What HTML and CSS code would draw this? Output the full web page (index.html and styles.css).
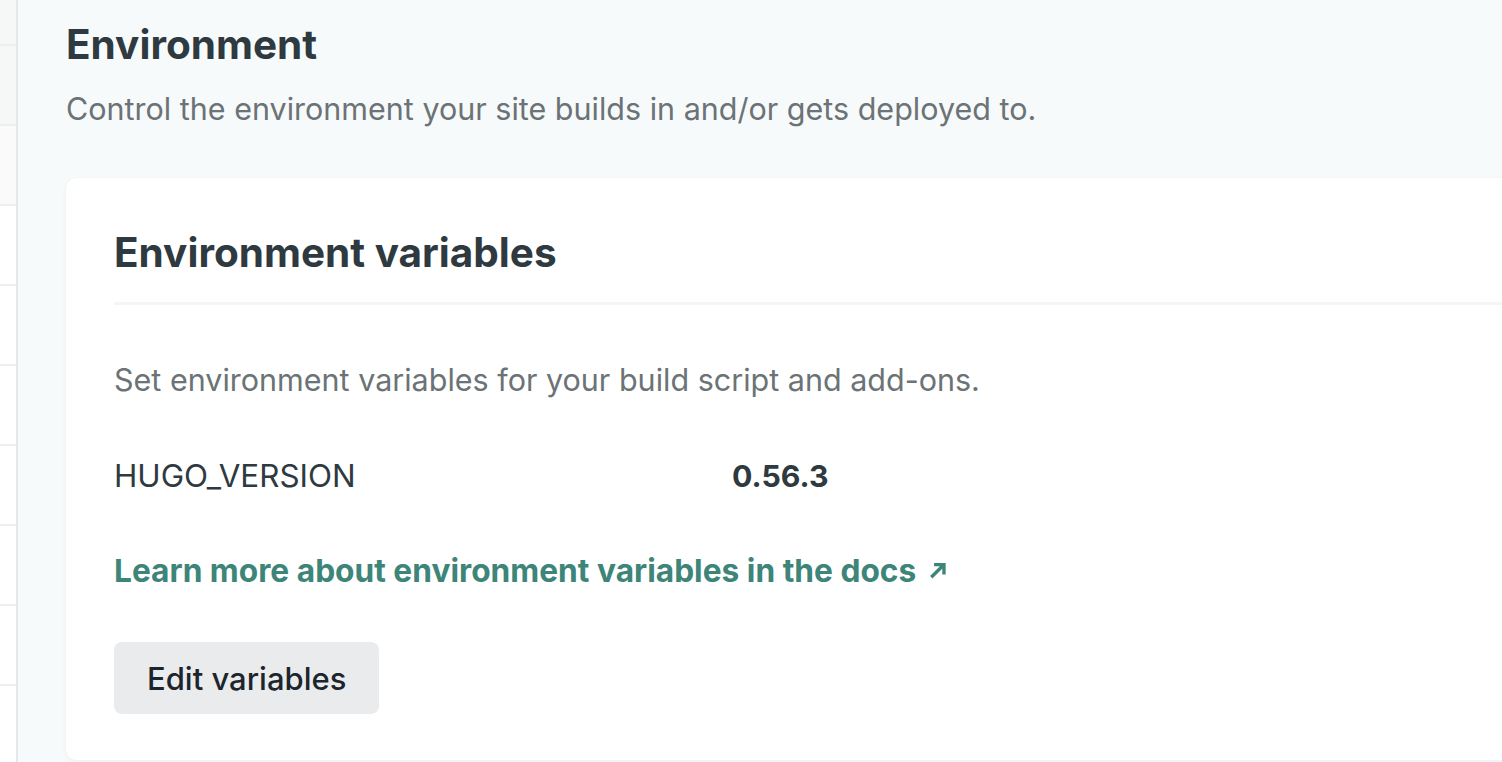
FILE: index.html
```html
<!DOCTYPE html>
<html lang="en">
<head>
<meta charset="utf-8">
<title>Environment</title>
<link rel="stylesheet" href="styles.css">
</head>
<body>
<div class="layout">
  <aside class="sidebar">
    <div class="side-row r1"></div>
    <div class="side-row r2"></div>
    <div class="side-row r3"></div>
    <div class="side-row"></div>
    <div class="side-row"></div>
    <div class="side-row"></div>
    <div class="side-row"></div>
    <div class="side-row"></div>
    <div class="side-row"></div>
    <div class="side-row"></div>
  </aside>
  <main class="main">
    <h1 class="page-title">Environment</h1>
    <p class="page-desc">Control the environment your site builds in and/or gets deployed to.</p>
    <section class="card">
      <header class="card-head">
        <h2 class="card-title">Environment variables</h2>
      </header>
      <div class="card-body">
        <p class="card-desc">Set environment variables for your build script and add-ons.</p>
        <dl class="vars">
          <dt class="var-key">HUGO_VERSION</dt>
          <dd class="var-val">0.56.3</dd>
        </dl>
        <a class="docs-link" href="#">Learn more about environment variables in the docs<svg class="ext" width="18" height="18" viewBox="0 0 16 16" aria-hidden="true"><path d="M2 14.5 L12.5 4 M4.5 3.2 H13.3 V12" fill="none" stroke="currentColor" stroke-width="3" stroke-linecap="butt" stroke-linejoin="miter"/></svg></a>
        <div class="actions">
          <button class="btn" type="button">Edit variables</button>
        </div>
      </div>
    </section>
  </main>
</div>
</body>
</html>
```
FILE: styles.css
```css
html, body {
  margin: 0;
  padding: 0;
}
body {
  width: 1502px;
  height: 762px;
  overflow: hidden;
  background: #f7fafb;
  font-family: Inter, "Noto Sans", sans-serif;
  color: #2e3a3f;
}
.layout {
  display: flex;
  height: 762px;
}
.sidebar {
  width: 16px;
  flex: 0 0 16px;
  border-right: 2px solid #e6e8ea;
  background: #ffffff;
  display: flex;
  flex-direction: column;
}
.side-row {
  height: 78px;
  flex: 0 0 78px;
  border-bottom: 2px solid #eceeef;
}
.side-row.r1 {
  height: 44px;
  flex-basis: 44px;
  background: #f6f7f7;
}
.side-row.r2 {
  background: #f6f7f7;
}
.side-row.r3 {
  background: #f9faf9;
}
.main {
  flex: 1;
  padding: 20px 0 0 48px;
  min-width: 0;
}
.page-title {
  margin: 0;
  font-size: 40.5px;
  line-height: 50px;
  font-weight: 700;
  color: #2e3a3f;
}
.page-desc {
  margin: 19px 0 0;
  font-size: 30.5px;
  line-height: 40px;
  color: #6b7376;
}
.card {
  margin-top: 49px;
  background: #ffffff;
  border-radius: 10px 0 0 10px;
  box-shadow: 0 0 2px rgba(0, 0, 0, 0.04), 0 2px 6px rgba(0, 0, 0, 0.035);
  height: 582px;
}
.card-head {
  margin-left: 48px;
  padding-top: 50px;
  padding-bottom: 24px;
  border-bottom: 3px solid #f4f5f6;
}
.card-title {
  margin: 0;
  font-size: 40.5px;
  line-height: 50px;
  font-weight: 700;
  color: #2e3a3f;
}
.card-body {
  padding: 0 0 0 48px;
}
.card-desc {
  margin: 0;
  padding-top: 55px;
  font-size: 30.5px;
  line-height: 40px;
  color: #6b7376;
}
.vars {
  display: grid;
  grid-template-columns: 618px auto;
  margin: 56px 0 0;
  line-height: 40px;
}
.var-key {
  margin: 0;
  font-size: 31.4px;
  color: #2e3a3f;
}
.var-val {
  margin: 0;
  font-size: 30.3px;
  font-weight: 700;
  color: #2e3a3f;
}
.docs-link {
  display: flex;
  width: max-content;
  align-items: center;
  gap: 13px;
  margin-top: 55px;
  font-size: 31.7px;
  line-height: 40px;
  font-weight: 700;
  color: #3d8479;
  text-decoration: none;
}
.ext {
  width: 18px;
  height: 18px;
  margin-top: -3px;
}
.actions {
  margin-top: 51px;
}
.btn {
  display: block;
  font-family: Inter, "Noto Sans", sans-serif;
  font-size: 31px;
  font-weight: 500;
  color: #1c252b;
  background: #e9ebed;
  border: none;
  border-radius: 8px;
  height: 72px;
  padding: 0 33px;
  cursor: pointer;
}
```
